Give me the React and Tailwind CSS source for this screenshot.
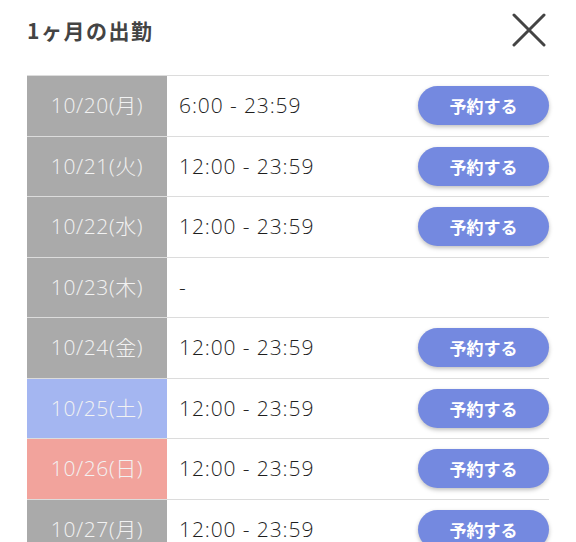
const rows = [
  { date: '10/20(月)', time: '6:00 - 23:59', tone: 'gray' },
  { date: '10/21(火)', time: '12:00 - 23:59', tone: 'gray' },
  { date: '10/22(水)', time: '12:00 - 23:59', tone: 'gray' },
  { date: '10/23(木)', time: '-', tone: 'gray', closed: true },
  { date: '10/24(金)', time: '12:00 - 23:59', tone: 'gray' },
  { date: '10/25(土)', time: '12:00 - 23:59', tone: 'blue' },
  { date: '10/26(日)', time: '12:00 - 23:59', tone: 'red' },
  { date: '10/27(月)', time: '12:00 - 23:59', tone: 'gray' },
]

const toneClass = {
  gray: 'bg-[#aaaaaa]',
  blue: 'bg-[#a4b6f1]',
  red: 'bg-[#f2a39c]',
}

const font = { fontFamily: '"Open Sans", "Noto Sans CJK JP", sans-serif' }

export default function App() {
  return (
    <div className="w-[576px] h-[542px] overflow-hidden bg-white text-[#333]" style={font}>
      <div className="flex items-center justify-between pl-[27px] pr-[30px] h-[62px]">
        <h1 className="text-[21px] font-bold tracking-[1.5px] text-[#444] font-['Noto_Sans_CJK_JP',sans-serif]">
          1ヶ月の出勤
        </h1>
        <svg width="34" height="34" viewBox="0 0 34 34" className="mt-[-2px]">
          <path d="M2 2 L32 32 M32 2 L2 32" stroke="#444" strokeWidth="3" strokeLinecap="round" />
        </svg>
      </div>

      <div className="mx-[27px] mt-[13px] border-t border-[#dcdcdc]">
        {rows.map((row) => (
          <div key={row.date} className="flex h-[60.5px] border-b border-[#dcdcdc]">
            <div
              className={`w-[140px] shrink-0 flex items-center justify-center text-[21px] font-light tracking-[0.6px] text-[#f2f2f2] ${toneClass[row.tone]}`}
            >
              {row.date}
            </div>
            <div className="flex-1 flex items-center justify-between pl-[12px]">
              <span className="text-[21px] font-light tracking-[0.9px] text-[#1e1e1e]">{row.time}</span>
              {!row.closed && (
                <button className="w-[131px] h-[39px] rounded-full bg-[#7489e0] text-white text-[17px] font-bold shadow-[0_2px_4px_rgba(0,0,0,0.25)] font-['Noto_Sans_CJK_JP',sans-serif]">
                  予約する
                </button>
              )}
            </div>
          </div>
        ))}
      </div>
    </div>
  )
}
